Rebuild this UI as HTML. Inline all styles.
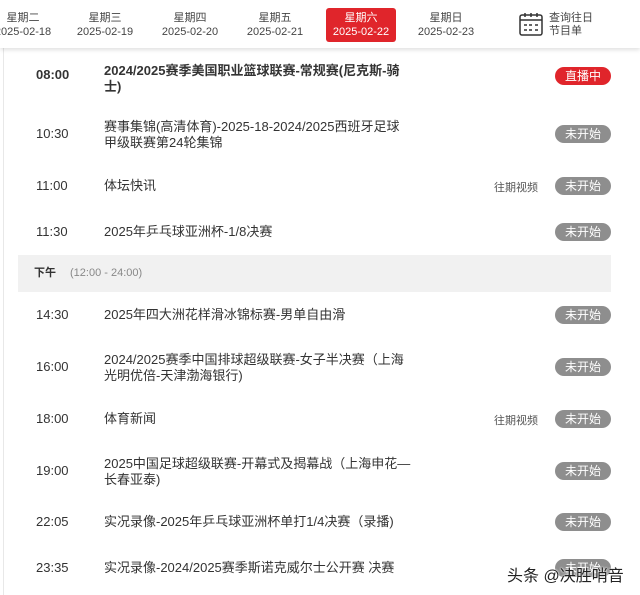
<!DOCTYPE html>
<html><head><meta charset="utf-8"><style>
*{margin:0;padding:0;box-sizing:border-box}
body{width:640px;height:595px;overflow:hidden;background:#fff;font-family:"Liberation Sans","Noto Sans CJK SC",sans-serif;color:#333;position:relative}
.hdr{position:absolute;left:0;top:0;width:640px;height:48px;background:#fff;box-shadow:0 2px 4px rgba(0,0,0,.12);z-index:2}
.d{position:absolute;top:8px;width:70px;height:34px;text-align:center;font-size:11px;line-height:14px;color:#444;padding-top:3px}
.d.on{background:#e0252b;color:#fff;border-radius:3px}
.vl{position:absolute;left:3px;top:48px;width:1px;height:547px;background:#e8e8e8}
.t{position:absolute;left:36px;font-size:13px;color:#333}
.n{position:absolute;left:104px;font-size:13px;line-height:16px;color:#333;white-space:nowrap}
.b{position:absolute;left:555px;width:56px;height:18px;border-radius:9px;background:#8e8e8e;color:#fff;font-size:12px;line-height:18px;text-align:center}
.b.live{background:#e0252b}
.w{position:absolute;left:494px;font-size:11px;color:#555}
.bar{position:absolute;left:18px;top:255px;width:593px;height:37px;background:#f1f1f1;font-size:11px;line-height:37px;padding-left:16px}
</style></head><body>
<div class="hdr">
<div class="d" style="left:-12px">星期二<br>2025-02-18</div>
<div class="d" style="left:70px">星期三<br>2025-02-19</div>
<div class="d" style="left:155px">星期四<br>2025-02-20</div>
<div class="d" style="left:240px">星期五<br>2025-02-21</div>
<div class="d on" style="left:326px">星期六<br>2025-02-22</div>
<div class="d" style="left:411px">星期日<br>2025-02-23</div>
<svg style="position:absolute;left:519px;top:12px" width="24" height="24" viewBox="0 0 24 24" fill="none" stroke="#333" stroke-width="1.5"><rect x="1" y="3" width="22" height="20" rx="2"/><path d="M6 1v4M12 1v4M18 1v4M1 8h22M5 13h3M10 13h3M16 13h3M5 18h3M10 18h3M16 18h3"/></svg>
<div style="position:absolute;left:549px;top:12px;font-size:11px;line-height:13px;color:#444">查询往日<br>节目单</div>
</div>
<div class="vl"></div>
<div class="t" style="top:67px;font-weight:bold">08:00</div>
<div class="n" style="top:63px;font-weight:bold">2024/2025赛季美国职业篮球联赛-常规赛(尼克斯-骑<br>士)</div>
<div class="b live" style="top:67px">直播中</div>
<div class="t" style="top:126px">10:30</div>
<div class="n" style="top:119px">赛事集锦(高清体育)-2025-18-2024/2025西班牙足球<br>甲级联赛第24轮集锦</div>
<div class="b" style="top:125px">未开始</div>
<div class="t" style="top:178px">11:00</div>
<div class="n" style="top:178px">体坛快讯</div>
<div class="w" style="top:179px">往期视频</div>
<div class="b" style="top:177px">未开始</div>
<div class="t" style="top:224px">11:30</div>
<div class="n" style="top:224px">2025年乒乓球亚洲杯-1/8决赛</div>
<div class="b" style="top:223px">未开始</div>
<div class="bar"><b style="color:#333">下午</b><span style="color:#888;margin-left:14px">(12:00 - 24:00)</span></div>
<div class="t" style="top:307px">14:30</div>
<div class="n" style="top:307px">2025年四大洲花样滑冰锦标赛-男单自由滑</div>
<div class="b" style="top:306px">未开始</div>
<div class="t" style="top:359px">16:00</div>
<div class="n" style="top:352px">2024/2025赛季中国排球超级联赛-女子半决赛（上海<br>光明优倍-天津渤海银行)</div>
<div class="b" style="top:358px">未开始</div>
<div class="t" style="top:411px">18:00</div>
<div class="n" style="top:411px">体育新闻</div>
<div class="w" style="top:412px">往期视频</div>
<div class="b" style="top:410px">未开始</div>
<div class="t" style="top:463px">19:00</div>
<div class="n" style="top:456px">2025中国足球超级联赛-开幕式及揭幕战（上海申花—<br>长春亚泰)</div>
<div class="b" style="top:462px">未开始</div>
<div class="t" style="top:514px">22:05</div>
<div class="n" style="top:514px">实况录像-2025年乒乓球亚洲杯单打1/4决赛（录播)</div>
<div class="b" style="top:513px">未开始</div>
<div class="t" style="top:560px">23:35</div>
<div class="n" style="top:560px">实况录像-2024/2025赛季斯诺克威尔士公开赛 决赛</div>
<div class="b" style="top:559px">未开始</div>
<div style="position:absolute;left:507px;top:562px;font-size:16px;color:#222;text-shadow:0 0 2px #fff,0 0 2px #fff">头条 @决胜哨音</div>
</body></html>
